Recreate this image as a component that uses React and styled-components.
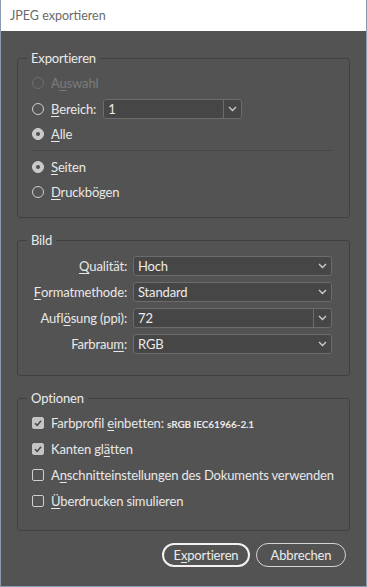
import React from 'react';
import styled, { createGlobalStyle } from 'styled-components';

const GlobalStyle = createGlobalStyle`
  html, body {
    margin: 0;
    padding: 0;
    background: #535353;
  }
  body {
    font-family: Lato, "Open Sans", sans-serif;
  }
`;

const Chevron = () => (
  <svg width="9" height="6" viewBox="0 0 9 6">
    <polyline points="1,1 4.5,4.5 8,1" fill="none" stroke="#cfcfcf" strokeWidth="1.3" />
  </svg>
);

const Check = () => (
  <svg width="10" height="10" viewBox="0 0 10 10">
    <polyline points="2,5.2 4.2,7.4 8,2.8" fill="none" stroke="#4a4a4a" strokeWidth="1.6" />
  </svg>
);

const Radio = ({ checked, disabled, label }) => (
  <Row>
    <RadioDot $checked={checked} $disabled={disabled} />
    <Label $disabled={disabled}>{label}</Label>
  </Row>
);

const CheckRow = ({ checked, children }) => (
  <OptRow>
    <Box $checked={checked}>{checked && <Check />}</Box>
    <Label>{children}</Label>
  </OptRow>
);

const Select = ({ value, split }) => (
  <SelectBox>
    <Value>{value}</Value>
    <DropButton $split={split}>
      <Chevron />
    </DropButton>
  </SelectBox>
);

const App = () => {
  return (
    <Window>
      <GlobalStyle />
      <TitleBar>JPEG exportieren</TitleBar>
      <Body>
        <Group>
          <Legend>Exportieren</Legend>
          <Stack>
            <Radio disabled label={<>A<Key>u</Key>swahl</>} />
            <RangeRow>
              <RadioDot />
              <Label><Key>B</Key>ereich:</Label>
              <RangeInput>
                <Value>1</Value>
                <DropButton $split>
                  <Chevron />
                </DropButton>
              </RangeInput>
            </RangeRow>
            <Radio checked label={<><Key>A</Key>lle</>} />
            <Separator />
            <Radio checked label={<><Key>S</Key>eiten</>} />
            <Radio label={<><Key>D</Key>ruckbögen</>} />
          </Stack>
        </Group>

        <Group $bottom={21}>
          <Legend>Bild</Legend>
          <FormGrid>
            <FieldLabel><Key>Q</Key>ualität:</FieldLabel>
            <Select value="Hoch" />
            <FieldLabel><Key>F</Key>ormatmethode:</FieldLabel>
            <Select value="Standard" />
            <FieldLabel>Aufl<Key>ö</Key>sung (ppi):</FieldLabel>
            <Select value="72" split />
            <FieldLabel>Farbrau<Key>m</Key>:</FieldLabel>
            <Select value="RGB" />
          </FormGrid>
        </Group>

        <Group $bottom={17}>
          <Legend>Optionen</Legend>
          <OptStack>
            <CheckRow checked>
              Farbprofil <Key>e</Key>inbetten: <Small>sRGB IEC61966-2.1</Small>
            </CheckRow>
            <CheckRow checked>
              Kanten gl<Key>ä</Key>tten
            </CheckRow>
            <CheckRow>
              A<Key>n</Key>schnitteinstellungen des Dokuments verwenden
            </CheckRow>
            <CheckRow>
              <Key>Ü</Key>berdrucken simulieren
            </CheckRow>
          </OptStack>
        </Group>

        <Buttons>
          <Button $primary>E<Key>x</Key>portieren</Button>
          <Button>Abbrechen</Button>
        </Buttons>
      </Body>
    </Window>
  );
};

const Window = styled.div`
  box-sizing: border-box;
  width: 367px;
  height: 587px;
  display: flex;
  flex-direction: column;
  background: #535353;
  border: 1px solid #8a9ab0;
  border-top: none;
  color: #e8e8e8;
  font-size: 13px;
  letter-spacing: -0.15px;
  overflow: hidden;
`;

const TitleBar = styled.div`
  height: 31px;
  display: flex;
  align-items: center;
  padding-left: 9px;
  background: #ffffff;
  color: #6a6a6a;
  font-size: 12.5px;
  letter-spacing: 0;
`;

const Body = styled.div`
  display: flex;
  flex-direction: column;
  gap: 14px;
  padding: 19px 16px 0 16px;
`;

const Group = styled.fieldset`
  margin: 0;
  padding: 0 17px ${p => p.$bottom ?? 13}px 14px;
  border: 1px solid #414141;
  border-radius: 3px;
  min-width: 0;
`;

const Legend = styled.legend`
  margin-left: -5px;
  padding: 0 4px;
  line-height: 16px;
  font-size: 13px;
  color: #eaeaea;
`;

const Stack = styled.div`
  display: flex;
  flex-direction: column;
  gap: 1px;
  padding-top: 5px;
`;

const Row = styled.div`
  height: 24px;
  display: flex;
  align-items: center;
  gap: 7px;
`;

const RangeRow = styled(Row)`
  height: 25px;
`;

const RadioDot = styled.span`
  box-sizing: border-box;
  flex-shrink: 0;
  width: 12px;
  height: 12px;
  border-radius: 50%;
  border: 1.5px solid ${p => (p.$disabled ? '#6f6f6f' : '#cfcfcf')};
  background: ${p => (p.$checked ? '#c9c9c9' : 'transparent')};
  display: flex;
  align-items: center;
  justify-content: center;

  &::after {
    content: '';
    display: ${p => (p.$checked ? 'block' : 'none')};
    width: 4px;
    height: 4px;
    border-radius: 50%;
    background: #505050;
  }
`;

const Label = styled.span`
  color: ${p => (p.$disabled ? '#7c7c7c' : '#e8e8e8')};
  white-space: nowrap;
`;

const Key = styled.span`
  text-decoration: underline;
  text-underline-offset: 2px;
`;

const Separator = styled.div`
  height: 1px;
  margin: 3px 0 3px;
  background: #464646;
`;

const SelectBox = styled.div`
  box-sizing: border-box;
  height: 20px;
  display: flex;
  align-items: stretch;
  border: 1px solid #6c6c6c;
  border-radius: 3px;
  background: #464646;
`;

const RangeInput = styled(SelectBox)`
  width: 139px;
  flex-shrink: 0;
`;

const Value = styled.span`
  flex: 1;
  display: flex;
  align-items: center;
  padding-left: 4px;
  color: #ececec;
`;

const DropButton = styled.span`
  width: 17px;
  display: flex;
  align-items: center;
  justify-content: center;
  border-left: 1px solid ${p => (p.$split ? '#6c6c6c' : 'transparent')};
`;

const FormGrid = styled.div`
  display: grid;
  grid-template-columns: 1fr 199px;
  column-gap: 6px;
  row-gap: 6px;
  padding-top: 8px;
`;

const FieldLabel = styled.span`
  display: flex;
  align-items: center;
  justify-content: flex-end;
  white-space: nowrap;
`;

const OptStack = styled.div`
  display: flex;
  flex-direction: column;
  gap: 2px;
  padding-top: 5px;
`;

const OptRow = styled.div`
  height: 24px;
  display: flex;
  align-items: center;
  gap: 7px;
`;

const Box = styled.span`
  box-sizing: border-box;
  flex-shrink: 0;
  width: 12px;
  height: 12px;
  border-radius: 2px;
  border: 1.5px solid ${p => (p.$checked ? '#c4c4c4' : '#cfcfcf')};
  background: ${p => (p.$checked ? '#c4c4c4' : 'transparent')};
  display: flex;
  align-items: center;
  justify-content: center;
`;

const Small = styled.span`
  font-size: 10px;
  font-weight: 700;
  letter-spacing: -0.1px;
`;

const Buttons = styled.div`
  display: flex;
  justify-content: flex-end;
  gap: 6px;
  margin-top: -2px;
  padding-right: 4px;
`;

const Button = styled.button`
  box-sizing: border-box;
  height: 24px;
  width: ${p => (p.$primary ? '88px' : '90px')};
  border-radius: 12px;
  border: ${p => (p.$primary ? '2px solid #f2f2f2' : '1px solid #d4d4d4')};
  background: transparent;
  color: #ececec;
  font-family: Lato, "Open Sans", sans-serif;
  font-size: 13px;
  letter-spacing: -0.15px;
  padding: 0;
`;

export default App;
